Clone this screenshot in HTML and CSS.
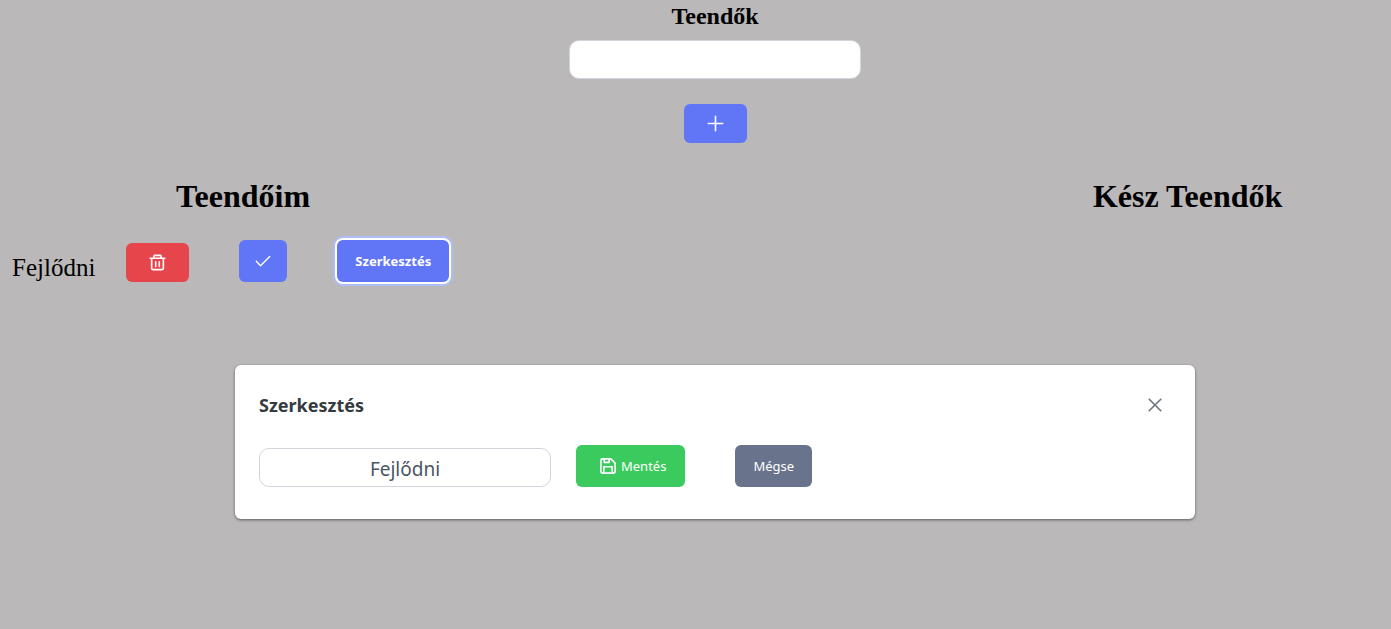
FILE: index.html
```
<!DOCTYPE html>
<html lang="hu">
<head>
<meta charset="utf-8">
<meta name="viewport" content="width=device-width, initial-scale=1">
<title>Teendők</title>
<link rel="stylesheet" href="styles.css">
</head>
<body>
<header class="new-todo">
  <h1 class="new-todo-title"><label for="new-todo">Teendők</label></h1>
  <input class="text-field" id="new-todo" type="text">
  <button class="button icon-button" type="button" aria-label="Hozzáadás">
    <svg class="icon" viewBox="0 0 18 18" fill="none" stroke="currentColor" stroke-width="1.7" stroke-linecap="round"><path d="M9 1.4v15.2M1.4 9h15.2"/></svg>
  </button>
</header>
<main class="lists">
  <section class="list open-list">
    <h2 class="list-title">Teendőim</h2>
    <div class="todo">
      <span class="todo-name">Fejlődni</span>
      <button class="button icon-button danger" type="button" aria-label="Törlés">
        <svg class="icon" viewBox="0 0 18 18" fill="none" stroke="currentColor" stroke-width="1.7" stroke-linecap="round" stroke-linejoin="round"><path d="M1.2 4.5h15.6M5.2 4.5V2.6q0-1.1 1.1-1.1h5.4q1.1 0 1.1 1.1v1.9M2.8 4.5v10.6q0 1.4 1.4 1.4h9.6q1.4 0 1.4-1.4V4.5M7.1 8.2v5M10.9 8.2v5"/></svg>
      </button>
      <button class="button done" type="button" aria-label="Kész">
        <svg class="icon-small" viewBox="0 0 16 16" fill="none" stroke="currentColor" stroke-width="1.4" stroke-linecap="round" stroke-linejoin="round"><path d="M1.3 8.3l4.2 4.4L14.7 3.5"/></svg>
      </button>
      <button class="button edit" type="button">Szerkesztés</button>
    </div>
  </section>
  <section class="list done-list">
    <h2 class="list-title">Kész Teendők</h2>
  </section>
</main>
<div class="dialog-area">
  <div class="dialog" role="dialog" aria-labelledby="dialog-title">
    <div class="dialog-header">
      <h2 class="dialog-title" id="dialog-title">Szerkesztés</h2>
      <button class="close" type="button" aria-label="Bezárás">
        <svg class="icon-close" viewBox="0 0 14 14" fill="none" stroke="currentColor" stroke-width="1.6" stroke-linecap="round"><path d="M1.2 1.2l11.6 11.6M12.8 1.2L1.2 12.8"/></svg>
      </button>
    </div>
    <form class="dialog-form">
      <input class="text-field" type="text" value="Fejlődni" aria-label="Teendő">
      <button class="button save" type="button">
        <svg class="icon-small" viewBox="0 0 16 16" fill="none" stroke="currentColor" stroke-width="1.6" stroke-linejoin="round"><path d="M2.4.9h8.5l4.2 4.2v8.5q0 1.5-1.5 1.5H2.4Q.9 15.1.9 13.6V2.4Q.9.9 2.4.9zM4.2 1v3.4h5V1M3.8 15V8.8h8.4V15"/></svg>
        Mentés
      </button>
      <button class="button cancel" type="button">Mégse</button>
    </form>
  </div>
</div>
</body>
</html>
```
FILE: styles.css
```
* {
  box-sizing: border-box;
}

body {
  margin: 0;
  background: #bab8b8;
  color: #000;
  font-family: "Liberation Serif", "Times New Roman", serif;
}

h1,
h2 {
  margin: 0;
}

svg {
  display: block;
}

.new-todo {
  display: flex;
  flex-direction: column;
  align-items: center;
  padding: 2px 0 0 39px;
}

.new-todo-title {
  margin-bottom: 10px;
  font-size: 24px;
  line-height: 28px;
}

.text-field {
  width: 292px;
  height: 39px;
  padding: 2px 12px 0;
  border: 1px solid #d1d5db;
  border-radius: 10px;
  background: #fff;
  color: #4b5563;
  font-family: "Noto Sans", sans-serif;
  font-size: 19px;
  text-align: center;
}

.new-todo .icon-button {
  margin-top: 25px;
}

.button {
  display: flex;
  align-items: center;
  justify-content: center;
  height: 42px;
  padding: 0 18px;
  border: 0;
  border-radius: 6px;
  background: #6076f6;
  color: #fff;
  font-family: "Noto Sans", sans-serif;
  font-size: 13px;
}

.icon-button {
  width: 63px;
  height: 39px;
  padding-bottom: 1px;
}

.icon {
  width: 17px;
  height: 17px;
}

.icon-small {
  width: 16px;
  height: 16px;
}

.lists {
  display: flex;
  justify-content: space-between;
  padding: 35px 2px 0 0;
}

.open-list {
  width: 35%;
}

.done-list {
  width: 29%;
}

.list-title {
  font-size: 32px;
  line-height: 37px;
  text-align: center;
}

.todo {
  display: flex;
  align-items: flex-end;
  margin-top: 25px;
  padding-left: 12px;
}

.todo-name {
  margin-right: 31px;
  font-size: 25px;
  line-height: 28px;
}

.danger {
  background: #e6464b;
}

.done {
  width: 48px;
  margin: 0 50px;
  padding: 0;
}

.edit {
  font-weight: 700;
  box-shadow: 0 0 0 2px #fff, 0 0 0 4px #aebdf8;
}

.dialog-area {
  display: flex;
  justify-content: center;
  margin-top: 83px;
  padding: 0 0 24px 39px;
}

.dialog {
  width: 100%;
  max-width: 960px;
  padding: 24px 24px 32px;
  border-radius: 6px;
  background: #fff;
  box-shadow: 0 1px 3px rgba(0, 0, 0, 0.5);
}

.dialog-header {
  display: flex;
  align-items: center;
  justify-content: space-between;
  height: 32px;
  margin-bottom: 24px;
}

.dialog-title {
  color: #343a40;
  font-family: "Noto Sans", sans-serif;
  font-size: 18px;
  line-height: 28px;
}

.close {
  display: flex;
  align-items: center;
  justify-content: center;
  width: 32px;
  height: 32px;
  padding: 0;
  border: 0;
  background: none;
  color: #6b7280;
}

.icon-close {
  width: 14px;
  height: 14px;
}

.dialog-form {
  display: flex;
  align-items: flex-end;
}

.save {
  gap: 5px;
  margin: 0 50px 0 25px;
  padding: 0 19px 0 24px;
  background: #3bca5d;
}

.cancel {
  background: #6a738c;
}
```
